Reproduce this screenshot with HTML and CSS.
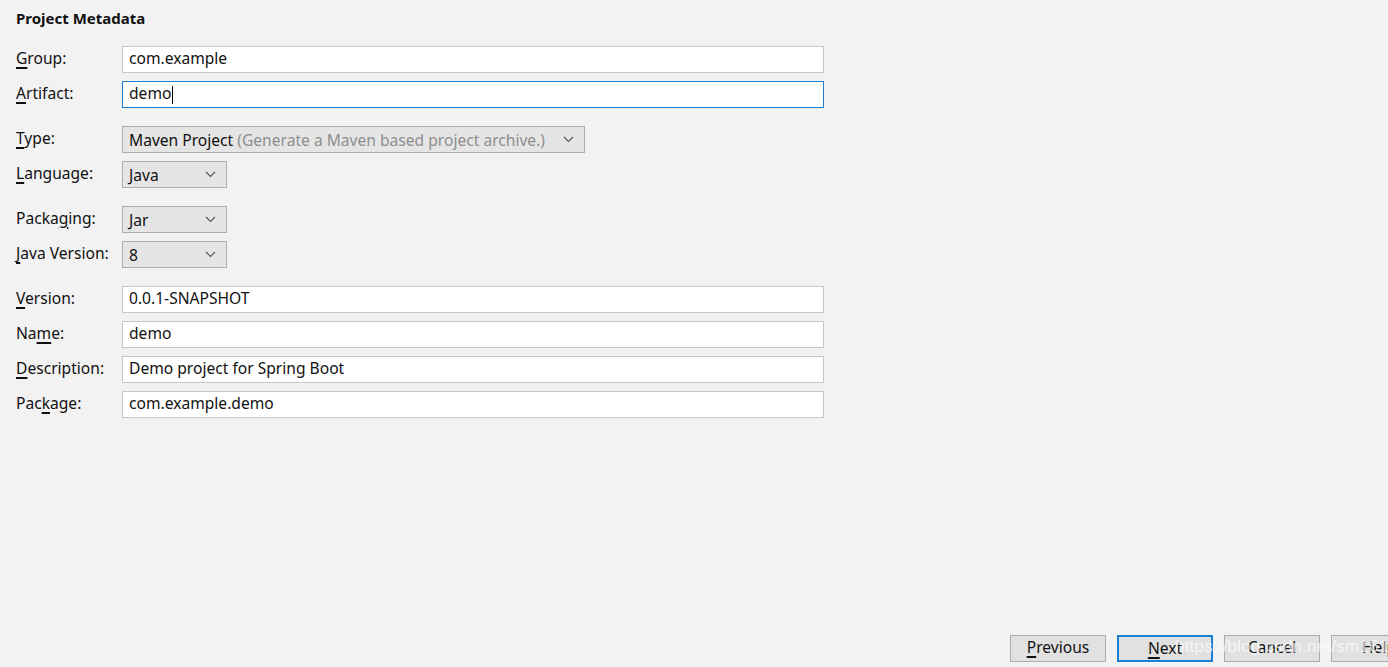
FILE: index.html
```html
<!DOCTYPE html>
<html>
<head>
<meta charset="utf-8">
<link rel="stylesheet" href="styles.css">
</head>
<body>
<div class="page">
  <main class="content">
    <h1 class="title">Project Metadata</h1>
    <div class="form">
      <div class="group">
        <div class="row"><label class="label"><u>G</u>roup:</label><div class="input">com.example</div></div>
        <div class="row"><label class="label"><u>A</u>rtifact:</label><div class="input focused">demo<span class="caret"></span></div></div>
      </div>
      <div class="group">
        <div class="row"><label class="label"><u>T</u>ype:</label><div class="combo wide"><span class="val">Maven Project <span class="hint">(Generate a Maven based project archive.)</span></span><svg class="chev" width="11" height="7" viewBox="0 0 11 7"><path d="M1 1l4.5 4.5L10 1" fill="none" stroke="#555" stroke-width="1.1"/></svg></div></div>
        <div class="row"><label class="label"><u>L</u>anguage:</label><div class="combo"><span class="val">Java</span><svg class="chev" width="11" height="7" viewBox="0 0 11 7"><path d="M1 1l4.5 4.5L10 1" fill="none" stroke="#555" stroke-width="1.1"/></svg></div></div>
      </div>
      <div class="group">
        <div class="row"><label class="label">Packa<u>g</u>ing:</label><div class="combo"><span class="val">Jar</span><svg class="chev" width="11" height="7" viewBox="0 0 11 7"><path d="M1 1l4.5 4.5L10 1" fill="none" stroke="#555" stroke-width="1.1"/></svg></div></div>
        <div class="row"><label class="label"><u>J</u>ava Version:</label><div class="combo"><span class="val">8</span><svg class="chev" width="11" height="7" viewBox="0 0 11 7"><path d="M1 1l4.5 4.5L10 1" fill="none" stroke="#555" stroke-width="1.1"/></svg></div></div>
      </div>
      <div class="group">
        <div class="row"><label class="label"><u>V</u>ersion:</label><div class="input">0.0.1-SNAPSHOT</div></div>
        <div class="row"><label class="label">Na<u>m</u>e:</label><div class="input">demo</div></div>
        <div class="row"><label class="label"><u>D</u>escription:</label><div class="input">Demo project for Spring Boot</div></div>
        <div class="row"><label class="label">Pac<u>k</u>age:</label><div class="input">com.example.demo</div></div>
      </div>
    </div>
  </main>
  <footer class="footer">
    <button class="btn"><u>P</u>revious</button>
    <button class="btn primary"><u>N</u>ext</button>
    <button class="btn">Cancel</button>
    <button class="btn">Help</button>
    <span class="watermark">https://blog.csdn.net/sm16161</span>
  </footer>
</div>
</body>
</html>
```
FILE: styles.css
```css
html, body {
  margin: 0;
  padding: 0;
  background: #f2f2f2;
  overflow: hidden;
}
body {
  font-family: "Noto Sans", "Open Sans", sans-serif;
  font-size: 15.6px;
  color: #111;
}
.page {
  height: 667px;
  display: flex;
  flex-direction: column;
}
.content {
  flex: 1;
  padding: 8px 0 0 16px;
}
.title {
  margin: 0 0 18px 0;
  font-size: 15px;
  font-weight: bold;
  line-height: 20px;
}
.form {
  display: flex;
  flex-direction: column;
  gap: 18px;
}
.group {
  display: flex;
  flex-direction: column;
  gap: 8px;
}
.row {
  display: flex;
  align-items: center;
  height: 27px;
}
.label {
  width: 106px;
  flex: none;
  line-height: 25px;
  padding-bottom: 2px;
}
u {
  text-decoration: underline;
  text-decoration-thickness: 2px;
  text-underline-offset: 3px;
}
.input {
  box-sizing: border-box;
  width: 702px;
  height: 27px;
  background: #fff;
  border: 1px solid #c6c6c6;
  padding: 0 6px 2px 6px;
  line-height: 23px;
  display: flex;
  align-items: center;
}
.input.focused {
  border-color: #1f7fd4;
}
.caret {
  display: inline-block;
  width: 1px;
  height: 18px;
  background: #000;
  margin-left: 1px;
  margin-top: 2px;
}
.combo {
  box-sizing: border-box;
  width: 105px;
  height: 27px;
  background: #e5e5e5;
  border: 1px solid #adadad;
  padding: 0 10px 0 6px;
  display: flex;
  align-items: center;
  justify-content: space-between;
}
.combo.wide {
  width: 463px;
}
.val {
  line-height: 24px;
  padding-top: 1px;
}
.hint {
  color: #8e8e8e;
}
.chev {
  flex: none;
}
.footer {
  position: relative;
  display: flex;
  justify-content: flex-end;
  gap: 11px;
  margin-right: -39px;
  padding-bottom: 5px;
  height: 27px;
}
.btn {
  box-sizing: border-box;
  width: 96px;
  height: 27px;
  background: #e1e1e1;
  border: 1px solid #adadad;
  font-family: inherit;
  font-size: 15.6px;
  color: #111;
  padding: 0 0 2px 0;
  line-height: 23px;
}
.btn.primary {
  border: 2px solid #1a7fd6;
}
.watermark {
  position: absolute;
  left: 1175px;
  top: 2px;
  font-family: "Liberation Sans", Arial, sans-serif;
  font-size: 17px;
  color: rgba(255, 255, 255, 0.7);
  white-space: nowrap;
  pointer-events: none;
  letter-spacing: 0.2px;
}
```
